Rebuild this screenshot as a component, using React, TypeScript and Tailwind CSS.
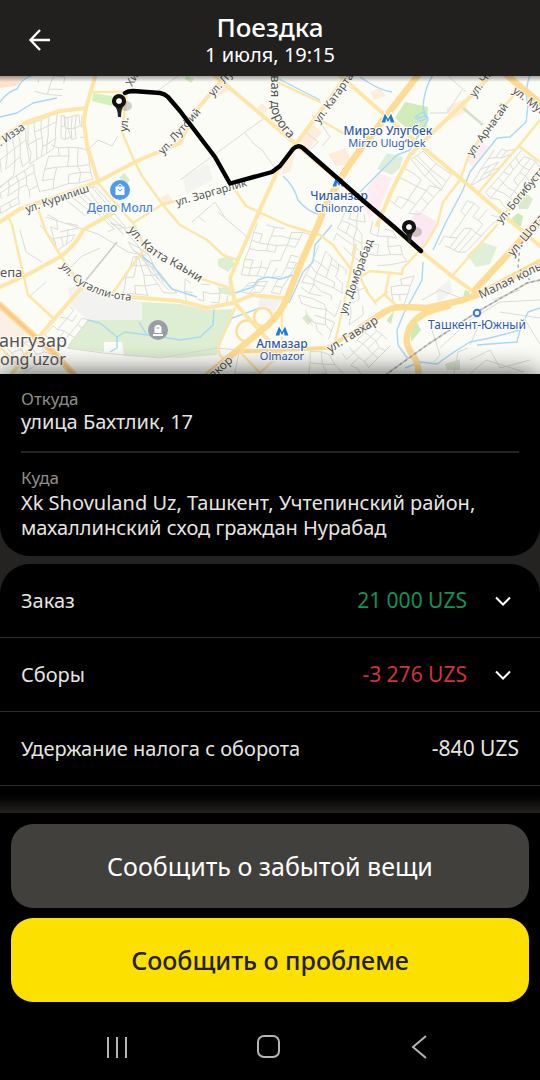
import { useState } from "react";

type Point = [number, number];

interface MapLabel {
  text: string;
  x: number;
  y: number;
  angle?: number;
  size?: number;
}

// Straight street names, rotated around the start of their baseline
const streetLabels: MapLabel[] = [
  { text: "ул. Изза", x: -9, y: 153, angle: -35 },
  { text: "ул. Курилиш", x: 27, y: 213, angle: -19 },
  { text: "ул. Лутфий", x: 163, y: 155, angle: -48 },
  { text: "ул.", x: 127, y: 132, angle: -84 },
  { text: "Хи", x: 132, y: 87, angle: -60 },
  { text: "ул. Лу", x: 213, y: 97, angle: -48 },
  { text: "ул. Катартал", x: 319, y: 124, angle: -54 },
  { text: "ул. Арнасай", x: 472, y: 157, angle: -54 },
  { text: "ул. Чи", x: 475, y: 98, angle: -55 },
  { text: "ул. Мукими", x: 512, y: 92, angle: 38 },
  { text: "ул. Богибустан", x: 501, y: 224, angle: -50 },
  { text: "ул. Шота", x: 513, y: 257, angle: -50, size: 12 },
  { text: "Малая кольцевая", x: 481, y: 299, angle: -26, size: 12 },
  { text: "ул. Домбрабад", x: 346, y: 315, angle: -70 },
  { text: "ул. Гавхар", x: 330, y: 353, angle: -32, size: 12 },
  { text: "алкор", x: 208, y: 384, angle: -42, size: 12 },
  { text: "ул. Заргарлик", x: 177, y: 206, angle: -16 },
  { text: "епа", x: 0, y: 277, size: 13 },
];

const minorRoads = [
  "M93 92 L127 92",
  "M127 92 L122 132 L133 158 L142 176 L163 205 L180 225 L207 240 L223 255 L237 260",
  "M97 182 L133 223 L145 248",
  "M180 200 L163 204 L133 223 M192 276 L230 288",
  "M38 209 L46 232 L62 258 L82 287",
  "M8 216 L12 225 L28 295 L53 318",
  "M145 248 L126 274 L113 293",
  "M235 308 L218 348 L220 355 L228 364",
  "M277 82 L320 102 M313 116 L343 133",
  "M233 187 L246 206 L287 225 L320 235 L333 245 L350 268 L358 271 M356 245 L343 308 L335 342",
  "M520 88 L503 108 L470 152 L460 180 L443 202 L437 225 L426 244 L403 268 L402 274 L370 271 L360 277 L367 292 L375 302 L387 292",
  "M389 274 L385 295 L397 306",
  "M540 120 L517 148 L478 193 M520 147 L540 162",
  "M497 222 L540 174 M497 225 L453 275",
  "M282 302 L282 352 L240 352 L260 373 L282 352",
  "M0 347 L23 370",
];

const majorRoads = [
  "M97 70 L86 108 L84 122 L87 145 L97 178",
  "M86 108 L60 111 L27 122 L0 138",
  "M0 222 L20 209 L67 193 L97 182 L137 161 L180 143 L195 112 L220 82 L227 72",
  "M113 213 L83 230 Q77 244 60 257 L27 275 L0 287",
  "M213 74 L270 122 L298 146 L360 198 L413 245 L453 277 L478 295",
  "M352 68 L320 112 L295 145 L277 172 L253 225 L237 262 L230 278 L235 303 L270 342",
  "M337 73 L360 93 L387 117 L420 145 L460 178 L507 218 L540 246",
  "M492 74 L467 100 L427 138 L410 155 L393 188 L377 225",
  "M82 287 L43 332 L23 358 L12 374",
  "M130 297 L180 301 L207 308 L233 303 L252 295 L283 298",
];

const highways = [
  "M422 70 L387 115 L360 150 L347 168 L327 202 L318 225 L303 258 L287 298 Q281 313 268 325 L240 348 L204 378",
  "M503 72 L540 103",
  "M360 328 L380 315 Q391 306 405 307 L427 308 L463 300 L482 293 L540 262",
  "M475 290 L510 252 L540 218",
  "M448 306 Q413 313 408 332 Q404 343 412 354 Q420 364 418 378",
  "M0 305 L33 335 L53 352 L77 378",
];

const rivers = [
  "M33 75 Q22 78 17 89 Q8 91 0 102",
  "M57 98 L33 103 L17 113 L0 117",
  "M360 77 Q378 90 392 92",
  "M433 75 Q424 88 423 108 L428 120 L418 136 L410 150 L397 155 L380 172 L360 192",
  "M530 75 Q524 92 528 105 L526 122 L510 137 L497 138 L470 172 L463 190 L446 222 L433 250",
  "M283 176 Q294 186 298 200 Q308 212 318 214",
  "M277 78 L320 100",
  "M332 225 L315 245 L313 262 L303 272 L296 288 L289 303",
  "M235 293 L253 287 L258 280 L267 277 L280 279 L293 275",
  "M143 257 L152 264 L160 275 L172 289 L197 297",
  "M88 320 L100 323 L117 337 L125 332 L147 335 L163 337 L180 340 L200 337 L213 325 L214 309",
  "M117 337 L117 348 L110 352 M139 322 L147 335",
  "M227 328 L232 318 L260 308",
  "M423 262 L422 280 L403 315 L397 330 L398 345 L408 359",
  "M405 368 L420 362 L437 364 L454 352 L470 342 L490 338 L520 330 L528 312 L540 308",
  "M477 345 L517 342 L520 330",
];

const blocks: { points: string; fill: string }[] = [
  { points: "0,75 27,75 16,86 0,88", fill: "#fbe3d0" },
  { points: "93,93 112,96 112,106 92,101", fill: "#d3f0bf" },
  { points: "186,76 194,79 191,83 185,79", fill: "#d3f0bf" },
  { points: "119,178 124,173 130,180 126,184", fill: "#dbe9d0" },
  { points: "405,102 428,107 427,128 418,138 395,118", fill: "#d1ecb9" },
  { points: "377,169 387,153 403,157 400,168 392,175", fill: "#dfeeda" },
  { points: "360,202 377,172 392,178 380,207 370,218", fill: "#fdecf2" },
  { points: "403,238 416,210 438,222 421,250", fill: "#fbe8f0" },
  { points: "467,160 477,141 490,147 473,168", fill: "#fdecf2" },
  { points: "446,108 464,99 468,111 450,120", fill: "#feeddd" },
  { points: "328,154 346,148 352,164 335,166", fill: "#feeddd" },
  { points: "370,92 380,88 386,96 374,100", fill: "#feeddd" },
  { points: "298,138 310,122 322,132 308,150", fill: "#feeddd" },
  { points: "284,156 296,150 290,172 282,174", fill: "#feeddd" },
  { points: "216,84 228,82 230,90 218,96", fill: "#feeddd" },
  { points: "257,108 262,103 268,109 264,114", fill: "#feeddd" },
  { points: "160,198 168,194 174,202 165,206", fill: "#feeddd" },
  { points: "183,178 208,163 213,180 186,194", fill: "#f3f3f0" },
  { points: "68,288 80,285 107,296 142,302 142,320 88,320 70,305", fill: "#f2f2f0" },
  { points: "142,302 180,304 207,310 233,309 217,355 180,358 124,356 122,342 104,342 104,352 67,348 88,320 142,320", fill: "#ddeed3" },
  { points: "260,297 281,300 272,316 258,306", fill: "#f2f2f0" },
  { points: "218,259 230,256 235,264 228,272 218,266", fill: "#ddeed3" },
  { points: "218,288 230,287 232,296 220,293", fill: "#ddeed3" },
  { points: "302,318 307,314 313,320 308,325", fill: "#dbe9d0" },
  { points: "467,255 482,242 497,247 490,264 476,267", fill: "#e0efd8" },
  { points: "388,318 394,311 391,324 387,321", fill: "#cdebb8" },
  { points: "410,328 416,320 421,330 411,342", fill: "#cdebb8" },
  { points: "465,290 470,292 467,300 463,297", fill: "#cdebb8" },
  { points: "512,218 518,213 523,216 521,226 514,226", fill: "#cdebb8" },
  { points: "517,202 526,193 533,199 528,209 519,209", fill: "#dbe9d0" },
  { points: "436,290 450,279 452,292 438,303", fill: "#f2f2f0" },
  { points: "445,364 460,359 460,370 447,370", fill: "#dbe9d0" },
  { points: "0,308 30,338 22,352 0,340", fill: "#fbf0e6" },
];

// Housing quarters: four corners, then the number of streets each way
const quarters: { corners: [Point, Point, Point, Point]; cols: number; rows: number }[] = [
  { corners: [[60, 117], [81, 116], [83, 138], [60, 138]], cols: 7, rows: 2 },
  { corners: [[28, 124], [56, 114], [54, 148], [30, 164]], cols: 4, rows: 4 },
  { corners: [[0, 146], [26, 128], [30, 160], [0, 188]], cols: 4, rows: 3 },
  { corners: [[50, 146], [86, 150], [94, 178], [40, 192]], cols: 4, rows: 4 },
  { corners: [[0, 186], [34, 164], [40, 192], [0, 214]], cols: 4, rows: 4 },
  { corners: [[66, 198], [96, 186], [132, 226], [104, 232]], cols: 6, rows: 2 },
  { corners: [[46, 216], [78, 226], [72, 240], [58, 250]], cols: 3, rows: 3 },
  { corners: [[112, 222], [134, 230], [170, 290], [150, 270]], cols: 2, rows: 7 },
  { corners: [[132, 258], [144, 256], [176, 294], [122, 294]], cols: 4, rows: 4 },
  { corners: [[184, 280], [226, 290], [228, 302], [188, 300]], cols: 5, rows: 2 },
  { corners: [[258, 222], [310, 236], [290, 276], [240, 276]], cols: 6, rows: 6 },
  { corners: [[250, 282], [288, 278], [280, 294], [240, 292]], cols: 4, rows: 2 },
  { corners: [[318, 246], [346, 270], [340, 306], [300, 288]], cols: 4, rows: 6 },
  { corners: [[300, 294], [338, 308], [330, 338], [312, 326]], cols: 3, rows: 4 },
  { corners: [[346, 208], [364, 214], [362, 262], [334, 240]], cols: 3, rows: 5 },
  { corners: [[410, 160], [422, 152], [450, 176], [440, 192]], cols: 3, rows: 2 },
  { corners: [[404, 168], [440, 190], [418, 216], [386, 200]], cols: 4, rows: 4 },
  { corners: [[494, 150], [514, 150], [496, 172], [470, 186]], cols: 3, rows: 4 },
  { corners: [[520, 152], [540, 166], [510, 210], [486, 192]], cols: 4, rows: 6 },
  { corners: [[468, 200], [498, 218], [466, 252], [438, 246]], cols: 5, rows: 4 },
  { corners: [[372, 222], [392, 232], [406, 262], [364, 266]], cols: 3, rows: 4 },
  { corners: [[352, 282], [364, 280], [376, 306], [350, 324]], cols: 2, rows: 4 },
  { corners: [[390, 280], [414, 276], [404, 304], [394, 300]], cols: 2, rows: 3 },
  { corners: [[68, 308], [88, 320], [68, 346], [46, 334]], cols: 4, rows: 3 },
  { corners: [[4, 344], [34, 340], [52, 356], [24, 372]], cols: 3, rows: 3 },
  { corners: [[342, 354], [372, 326], [392, 344], [362, 374]], cols: 4, rows: 4 },
  { corners: [[310, 352], [330, 354], [342, 374], [310, 374]], cols: 2, rows: 2 },
  { corners: [[40, 78], [66, 76], [62, 96], [34, 92]], cols: 2, rows: 3 },
  { corners: [[240, 350], [262, 338], [262, 372], [236, 372]], cols: 1, rows: 1 },
];

const lanes = [
  "M180 180 L263 119 M245 133 L254 144 L262 150 L275 168",
  "M156 92 L178 76 M20 230 L26 252 L42 262 M78 228 L60 232",
  "M46 217 L98 234 L128 252 L146 256",
  "M88 150 L98 140 L112 146 L118 136",
  "M320 122 L330 137 L322 146 M306 132 L318 142 L310 150",
  "M192 222 L215 202 L225 218 M205 222 L198 216 M218 212 L246 236",
  "M430 113 L447 113 L462 90 M448 76 L466 92",
  "M422 300 L440 290 L466 300 M432 330 L440 355 L434 362",
  "M440 348 L470 320 L500 302 L540 300 M470 345 L480 322",
  "M470 360 L490 350 L500 368 L530 360 M470 374 L486 360 L524 372 M454 374 L458 352 L468 348",
  "M492 300 L520 290 M500 312 L540 318 M525 320 L540 344",
  "M67 348 L103 353 L160 358 L217 348 L260 352",
  "M40 225 L56 243 M70 268 L82 256 L100 248 M30 296 L46 282",
];

// Streets of a quarter are slightly crooked and some of them have gaps
function quarterPath([a, b, c, d]: [Point, Point, Point, Point], cols: number, rows: number) {
  const noise = (n: number) => {
    const s = Math.sin(n * 12.9898 + a[0]) * 43758.5453;
    return s - Math.floor(s);
  };
  const at = (i: number, j: number): string => {
    const u = i / cols;
    const v = j / rows;
    const x = (1 - v) * (a[0] + (b[0] - a[0]) * u) + v * (d[0] + (c[0] - d[0]) * u);
    const y = (1 - v) * (a[1] + (b[1] - a[1]) * u) + v * (d[1] + (c[1] - d[1]) * u);
    const shift = noise(i * 17 + j * 5) * 3 - 1.5;
    return `${(x + shift).toFixed(1)} ${(y - shift).toFixed(1)}`;
  };
  let path = "";
  for (let i = 0; i <= cols; i++) {
    for (let j = 0; j <= rows; j++) {
      if (i < cols && noise(i * 7 + j * 3 + 1) > 0.25) path += `M${at(i, j)} L${at(i + 1, j)} `;
      if (j < rows && noise(i * 3 + j * 11 + 2) > 0.2) path += `M${at(i, j)} L${at(i, j + 1)} `;
    }
  }
  return path;
}

function MetroMark({ x, y }: { x: number; y: number }) {
  return (
    <path
      transform={`translate(${x} ${y})`}
      d="M-6.5 4.5 L-3 -4.5 L0 1 L3 -4.5 L6.5 4.5 L2.5 4.5 L2 0.5 L0 4 L-2 0.5 L-2.5 4.5 Z"
      fill="#1f7bd8"
      stroke="#fff"
      strokeWidth="2"
      paintOrder="stroke"
    />
  );
}

function Pin({ x, y }: { x: number; y: number }) {
  return (
    <g transform={`translate(${x} ${y})`}>
      <ellipse cx="7" cy="5" rx="6" ry="5" fill="#777" opacity="0.35" />
      <path d="M-5 4 Q-1 8 -1 16 L2 16 Q2 8 5 4 Z" fill="#222" />
      <circle r="4.9" fill="#ddd" stroke="#111" strokeWidth="4.4" />
      <circle r="2.6" fill="#fff" />
    </g>
  );
}

function RouteMap() {
  return (
    <svg
      viewBox="0 76 540 298"
      className="block h-auto w-full bg-[#fcfcf7] font-['Noto_Sans',sans-serif]"
      role="img"
      aria-label="Маршрут поездки"
    >
      <defs>
        <filter id="cardShade" x="-20%" y="-200%" width="140%" height="500%">
          <feGaussianBlur stdDeviation="15" />
        </filter>
        <linearGradient id="headerShade" x1="0" y1="0" x2="0" y2="1">
          <stop offset="0" stopColor="#000" stopOpacity="0.35" />
          <stop offset="1" stopColor="#000" stopOpacity="0" />
        </linearGradient>
        <path id="ringRoad" d="M271 68 L271 106 Q273 128 306 154" />
        <path id="kattaKani" d="M128 230 Q146 254 168 264 Q182 270 204 286" />
        <path id="sugalliOta" d="M60 266 Q84 299 136 301" />
      </defs>

      {blocks.map((block) => (
        <polygon key={block.points} points={block.points} fill={block.fill} />
      ))}

      <g fill="none" stroke="#dbdbd8" strokeWidth="1">
        {quarters.map((q, i) => (
          <path key={i} d={quarterPath(q.corners, q.cols, q.rows)} />
        ))}
        {lanes.map((d) => (
          <path key={d} d={d} />
        ))}
        <path d="M117 242 L82 285" stroke="#cbcbc8" strokeWidth="1.5" />
        <path d="M463 108 L483 125" stroke="#d2e0cc" strokeWidth="2.5" />
      </g>

      <g fill="none" stroke="#a9d8f3" strokeWidth="1.4" strokeLinejoin="round">
        {rivers.map((d) => (
          <path key={d} d={d} />
        ))}
        <path d="M416 116 L423 112 L428 118 L424 116 L419 118 Z M414 117 L420 121 L426 119" />
      </g>

      <g fill="none" strokeLinejoin="round" strokeLinecap="round">
        {minorRoads.map((d) => (
          <path key={d} d={d} stroke="#fde6a6" strokeWidth="2.4" />
        ))}
        <circle cx="263" cy="317" r="9" stroke="#fde09a" strokeWidth="2.6" />
        <circle cx="247" cy="331" r="10.5" stroke="#fde09a" strokeWidth="2.6" />
        {majorRoads.map((d) => (
          <path key={d} d={d} stroke="#fde6a6" strokeWidth="4" />
        ))}
        <path d="M245 351 L327 348 L360 328" stroke="#fedc93" strokeWidth="4" />
        {highways.map((d) => (
          <path key={d} d={d} stroke="#fedc93" strokeWidth="6.5" />
        ))}
        <path d="M0 305 L33 335 L53 352 L77 378" stroke="#fbc88a" strokeWidth="3" />
        <path d="M540 280 L527 283 L477 312 L427 345 L384 376" stroke="#c5c5c5" strokeWidth="1.5" />
        <path
          d="M540 280 L527 283 L477 312 L427 345 L384 376 M540 225 L520 245 L518 268 L530 280"
          stroke="#a5a5a5"
          strokeWidth="1.5"
          strokeDasharray="3 3"
          strokeLinecap="butt"
        />
      </g>

      <g fill="#555" stroke="#fcfcf7" strokeWidth="2" paintOrder="stroke" fontSize="11">
        {streetLabels.map((label) => (
          <text
            key={label.text + label.x}
            transform={`translate(${label.x} ${label.y}) rotate(${label.angle ?? 0})`}
            fontSize={label.size ?? 11}
          >
            {label.text}
          </text>
        ))}
        <text fontSize="13">
          <textPath href="#ringRoad">евая дорога</textPath>
        </text>
        <text fontSize="12">
          <textPath href="#kattaKani">ул. Катта Каьни</textPath>
        </text>
        <text>
          <textPath href="#sugalliOta">ул. Сугалли-ота</textPath>
        </text>
        <text x="-1" y="347" fontSize="18">ангузар</text>
        <text x="0" y="365" fontSize="16">ongʻuzor</text>
      </g>

      <g fill="#2f5aa8" stroke="#fff" strokeWidth="2" paintOrder="stroke" textAnchor="middle" fontSize="11">
        <text x="388" y="135" fontSize="12" fontWeight="500">Мирзо Улугбек</text>
        <text x="387" y="147">Mirzo Ulugʻbek</text>
        <text x="339" y="200" fontSize="12" fontWeight="500">Чиланзар</text>
        <text x="339" y="212">Chilonzor</text>
        <text x="282" y="348" fontSize="12" fontWeight="500">Алмазар</text>
        <text x="282" y="360">Olmazor</text>
        <text x="477" y="329" fontSize="12">Ташкент-Южный</text>
        <text x="120" y="212" fontSize="12" fontWeight="500" fill="#4683d3">Депо Молл</text>
      </g>
      <MetroMark x={388} y={118} />
      <MetroMark x={339} y={182} />
      <MetroMark x={282} y={331} />
      <circle cx="477" cy="313" r="3.2" fill="#fff" stroke="#2f7be5" strokeWidth="2" />

      <circle cx="120" cy="190" r="10" fill="#4e9bea" />
      <path d="M115.5 186.5 H124.5 V195 H115.5 Z" fill="#fff" />
      <path d="M118 187 V185.5 Q120 182.5 122 185.5 V187" fill="none" stroke="#fff" />
      <path d="M118 189 Q120 193 122 189" fill="none" stroke="#4e9bea" />

      <circle cx="158" cy="330" r="10" fill="#9a9da3" />
      <path d="M154.5 333 V327 Q158 322.5 161.5 327 V333 Z M153 334 H163 V336 H153 Z" fill="#fff" />
      <path d="M156.5 328 H159.5" stroke="#9a9da3" />

      <rect x="0" y="378" width="540" height="80" fill="#000" opacity="0.95" filter="url(#cardShade)" />
      <rect x="0" y="76" width="540" height="6" fill="url(#headerShade)" />

      <path
        d="M125 93 Q128 91 133 91 L160 93 Q165 94 168 97 L180 111 L215 157 L230 183.5 L272 172 L280 166 L293 149 Q298 144 303 148 L360 198 L393 226 L421 251"
        fill="none"
        stroke="#000"
        strokeWidth="4.4"
        strokeLinecap="round"
        strokeLinejoin="round"
      />
      <Pin x={119} y={101} />
      <Pin x={409} y={227} />
    </svg>
  );
}

interface FareRowProps {
  title: string;
  amount: string;
  amountClass: string;
}

function FareRow({ title, amount, amountClass }: FareRowProps) {
  const [open, setOpen] = useState(false);

  return (
    <button
      type="button"
      aria-expanded={open}
      onClick={() => setOpen(!open)}
      className="flex w-full items-center border-b border-[#2b2b2a] px-[21px] py-6 text-left text-xl leading-[25px]"
    >
      <span className="grow">{title}</span>
      <span className={amountClass}>{amount}</span>
      <span className="ml-5 flex w-8 justify-center">
        <svg width="16" height="10" viewBox="0 0 16 10" fill="none" stroke="#fff" strokeWidth="2">
          <path d="M1 1.5 L8 8.5 L15 1.5" />
        </svg>
      </span>
    </button>
  );
}

export default function App() {
  return (
    <div className="flex min-h-screen flex-col bg-black font-['Noto_Sans',sans-serif] text-[#e6e5e0]">
      <header className="relative bg-[#21201e] pt-[11px] pb-[9px] text-center text-white">
        <button type="button" aria-label="Назад" className="absolute inset-y-0 left-0 flex items-center px-7 pt-1">
          <svg width="24" height="24" viewBox="0 0 24 24" fill="none" stroke="currentColor" strokeWidth="2.4">
            <path d="M22 12 H3 M12 2 L2.5 12 L12 22" />
          </svg>
        </button>
        <h1 className="text-[26px] leading-8 font-medium">Поездка</h1>
        <p className="text-xl leading-6">1 июля, 19:15</p>
      </header>

      <main className="flex grow flex-col bg-[#242321]">
        <RouteMap />

        <section className="rounded-b-[30px] bg-black px-[21px] pt-[15px] pb-4">
          <div className="border-b-2 border-[#232323] pb-[17px]">
            <p className="text-[17px] leading-5 text-[#8f8e8a]">Откуда</p>
            <p className="text-xl leading-[25px]">улица Бахтлик, 17</p>
          </div>
          <div className="pt-[15px]">
            <p className="text-[17px] leading-5 text-[#8f8e8a]">Куда</p>
            <p className="pt-0.5 text-xl leading-[25px]">
              Xk Shovuland Uz, Ташкент, Учтепинский район, махаллинский сход граждан Нурабад
            </p>
          </div>
        </section>

        <section className="mt-2 rounded-t-[30px] bg-black">
          <FareRow title="Заказ" amount="21 000 UZS" amountClass="text-[21px] text-[#109456]" />
          <FareRow title="Сборы" amount="-3 276 UZS" amountClass="text-[21px] text-[#d2333a]" />
          <div className="flex items-center justify-between border-b border-[#2b2b2a] px-[21px] py-6 text-xl leading-[25px]">
            <span>Удержание налога с оборота</span>
            <span className="text-[21px]">-840 UZS</span>
          </div>
        </section>
        <div className="min-h-6 grow bg-linear-to-b from-black to-[#242321]" />
      </main>

      <footer className="flex flex-col gap-2.5 bg-black px-[11px] pt-[11px] text-[25px] leading-9">
        <button type="button" className="rounded-[22px] bg-[#42403c] py-6 text-white">
          Сообщить о забытой вещи
        </button>
        <button type="button" className="rounded-[22px] bg-[#fce000] py-6 font-medium text-[#21201e]">
          Сообщить о проблеме
        </button>
        <nav className="flex items-center justify-between px-[93px] pt-[22px] pb-5 text-[#b5b5b5]">
          <button type="button" aria-label="Недавние">
            <svg width="26" height="26" viewBox="0 0 26 26" stroke="currentColor" strokeWidth="2">
              <path d="M4 3 V24 M13 3 V24 M22 3 V24" />
            </svg>
          </button>
          <button type="button" aria-label="Домой">
            <svg width="26" height="26" viewBox="0 0 26 26" fill="none" stroke="currentColor" strokeWidth="2">
              <rect x="1" y="2" width="21" height="21" rx="6" />
            </svg>
          </button>
          <button type="button" aria-label="Обратно">
            <svg width="26" height="26" viewBox="0 0 26 26" fill="none" stroke="currentColor" strokeWidth="2">
              <path d="M16 2 L3 13 L16 24" />
            </svg>
          </button>
        </nav>
      </footer>
    </div>
  );
}
